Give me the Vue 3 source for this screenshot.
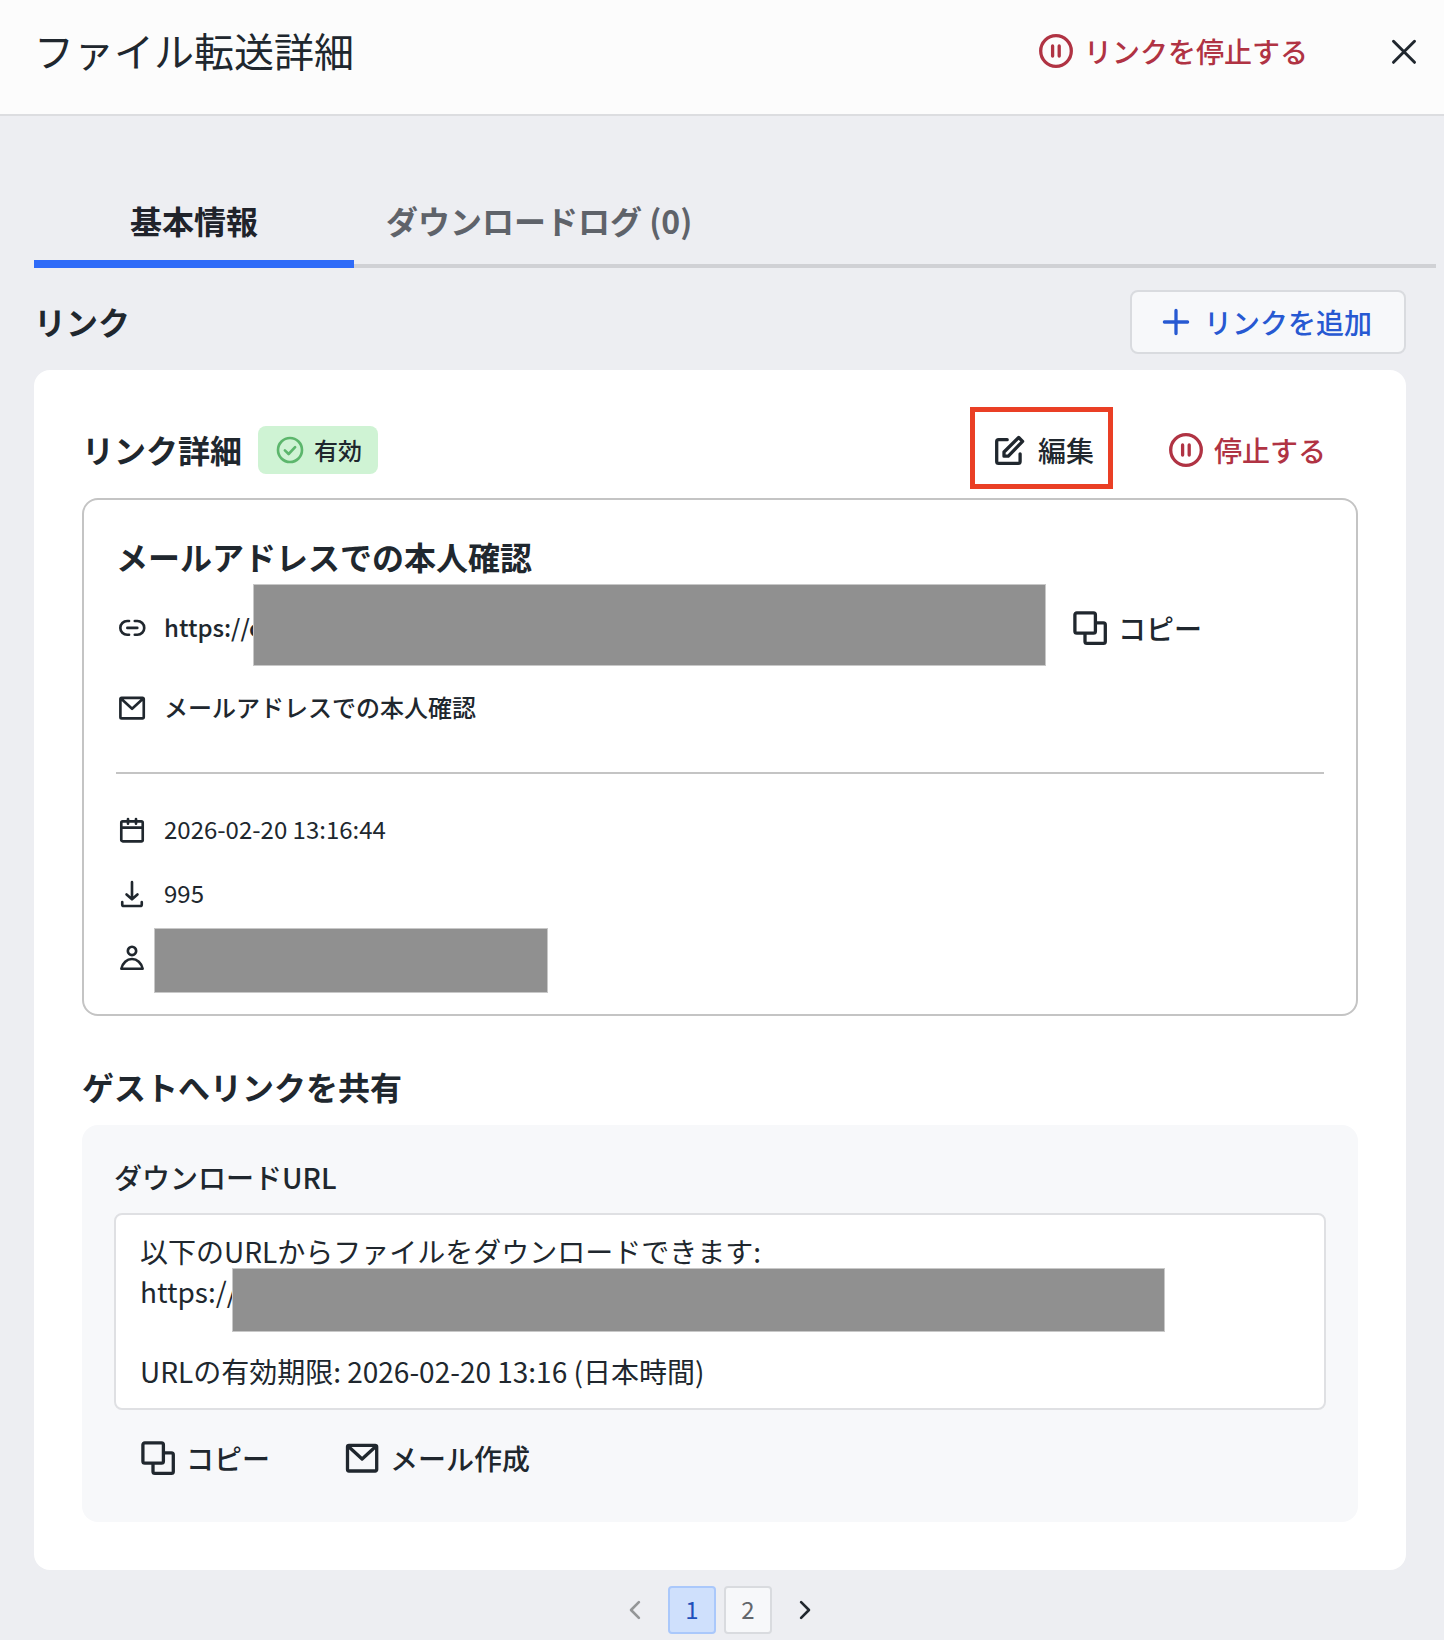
<template>
  <div class="transfer-detail">
    <header class="detail-header">
      <h1 class="detail-title">ファイル転送詳細</h1>
      <div class="header-actions">
        <button type="button" class="text-btn danger">
          <Icon name="pause" class="icon" />リンクを停止する
        </button>
        <button type="button" class="close-btn" aria-label="閉じる">
          <Icon name="close" class="icon" />
        </button>
      </div>
    </header>

    <main class="detail-body">
      <div class="tabs" role="tablist">
        <button
          v-for="tab in tabs"
          :key="tab.key"
          type="button"
          role="tab"
          class="tab"
          :class="{ active: tab.key === activeTab }"
          :aria-selected="tab.key === activeTab"
          @click="activeTab = tab.key"
        >
          {{ tab.label }}
        </button>
      </div>

      <div class="content">
        <div class="section-head">
          <h2 class="heading">リンク</h2>
          <button type="button" class="add-btn">
            <Icon name="plus" class="icon" />リンクを追加
          </button>
        </div>

        <section class="card">
          <div class="card-head">
            <h3 class="heading">リンク詳細</h3>
            <span class="badge"><Icon name="check" class="icon small" />有効</span>
            <div class="card-actions">
              <button type="button" class="text-btn highlighted">
                <Icon name="edit" class="icon" />編集
              </button>
              <button type="button" class="text-btn danger">
                <Icon name="pause" class="icon" />停止する
              </button>
            </div>
          </div>

          <div class="link-box">
            <h4 class="heading link-name">メールアドレスでの本人確認</h4>
            <div class="info-row tall medium">
              <Icon name="link" class="icon small" />
              <span class="info-text link-url">https://c</span>
              <span class="mask mask-url"></span>
              <button type="button" class="text-btn">
                <Icon name="copy" class="icon" />コピー
              </button>
            </div>
            <div class="info-row tall medium">
              <Icon name="mail" class="icon small" />
              <span class="info-text">メールアドレスでの本人確認</span>
            </div>
            <hr class="divider" />
            <div class="info-list">
              <div class="info-row">
                <Icon name="calendar" class="icon small" />
                <span class="info-text">2026-02-20 13:16:44</span>
              </div>
              <div class="info-row">
                <Icon name="download" class="icon small" />
                <span class="info-text">995</span>
              </div>
              <div class="info-row">
                <Icon name="user" class="icon small" />
                <span class="mask mask-user"></span>
              </div>
            </div>
          </div>

          <h3 class="heading share-title">ゲストへリンクを共有</h3>
          <div class="share-panel">
            <label for="share-text" class="share-label">ダウンロードURL</label>
            <div class="share-field">
              <textarea id="share-text" class="share-text" rows="4" readonly :value="shareText"></textarea>
              <span class="mask mask-share"></span>
            </div>
            <div class="share-actions">
              <button type="button" class="text-btn">
                <Icon name="copy" class="icon" />コピー
              </button>
              <button type="button" class="text-btn">
                <Icon name="mail" class="icon" />メール作成
              </button>
            </div>
          </div>
        </section>

        <nav class="pagination" aria-label="ページ">
          <button type="button" class="page-arrow" aria-label="前へ" :disabled="page === 1" @click="page--">
            <Icon name="prev" class="icon small" />
          </button>
          <button
            v-for="n in pageCount"
            :key="n"
            type="button"
            class="page-btn"
            :class="{ active: n === page }"
            @click="page = n"
          >
            {{ n }}
          </button>
          <button type="button" class="page-arrow" aria-label="次へ" :disabled="page === pageCount" @click="page++">
            <Icon name="next" class="icon small" />
          </button>
        </nav>
      </div>
    </main>
  </div>
</template>

<script setup>
import { h, ref } from 'vue'

// 40x40 の線アイコン
const icons = {
  pause: 'M20 4.7a15.3 15.3 0 1 1 0 30.6a15.3 15.3 0 1 1 0-30.6ZM16.6 15V25M23.2 15V25',
  close: 'M9.5 10.3L30.5 31.3M30.5 10.3L9.5 31.3',
  plus: 'M20 8.4V31.6M8.4 20H31.6',
  check: 'M20 5a15 15 0 1 1 0 30a15 15 0 1 1 0-30ZM13.6 20.4L18.3 25L26.4 16.4',
  edit: 'M17.2 9.7H8.6a1.9 1.9 0 0 0-1.9 1.9V31.5a1.9 1.9 0 0 0 1.9 1.9H28.2a1.9 1.9 0 0 0 1.9-1.9V23.8M14 22L28.7 7.5L32.6 11.4L18.3 26.2H14Z',
  copy: 'M6.8 4.8H23.5a1.9 1.9 0 0 1 1.9 1.9V23.2a1.9 1.9 0 0 1-1.9 1.9H6.8a1.9 1.9 0 0 1-1.9-1.9V6.7a1.9 1.9 0 0 1 1.9-1.9ZM26 14.8H33.4a1.9 1.9 0 0 1 1.9 1.9V33.4a1.9 1.9 0 0 1-1.9 1.9H16.9a1.9 1.9 0 0 1-1.9-1.9V26',
  mail: 'M7 7.3H33.2a1.5 1.5 0 0 1 1.5 1.5V31.5a1.5 1.5 0 0 1-1.5 1.5H7a1.5 1.5 0 0 1-1.5-1.5V8.8A1.5 1.5 0 0 1 7 7.3ZM6.2 8.2L20.1 21L34 8.2',
  link: 'M16.3 11.3H14a8.6 8.6 0 0 0 0 17.2H16.3M23.5 11.3H26.7a8.6 8.6 0 0 1 0 17.2H23.5M14.2 19.9H26.6',
  calendar: 'M8.4 9.2H31.6a1.8 1.8 0 0 1 1.8 1.8V32.4a1.8 1.8 0 0 1-1.8 1.8H8.4a1.8 1.8 0 0 1-1.8-1.8V11a1.8 1.8 0 0 1 1.8-1.8ZM6.6 17.1H33.4M15 6.2V12.2M25 6.2V12.2',
  download: 'M20 5.2V26.4M13.2 20.6L20 26.6L26.8 20.6M7.8 30.2V33a2 2 0 0 0 2 2H30.2a2 2 0 0 0 2-2V30.2',
  user: 'M20 6a5.2 5.2 0 1 1 0 10.4a5.2 5.2 0 1 1 0-10.4ZM6.7 33.4C8.2 26 13.6 21.3 20 21.3S31.8 26 33.3 33.4Z',
  prev: 'M23.6 10.2L13.8 20L23.6 29.8',
  next: 'M16.4 10.2L26.2 20L16.4 29.8'
}

const Icon = ({ name }) =>
  h('svg', { viewBox: '0 0 40 40', 'aria-hidden': 'true' }, [h('path', { d: icons[name] })])
Icon.props = ['name']

const tabs = [
  { key: 'basic', label: '基本情報' },
  { key: 'log', label: 'ダウンロードログ (0)' }
]
const activeTab = ref('basic')

const page = ref(1)
const pageCount = 2

const shareText = `以下のURLからファイルをダウンロードできます:
https://

URLの有効期限: 2026-02-20 13:16 (日本時間)`
</script>

<style>
body {
  margin: 0;
  background: #edeef2;
}
</style>

<style scoped>
.transfer-detail {
  min-height: 100vh;
  background: #edeef2;
  color: #20272e;
  font-family: "Noto Sans CJK JP", "Noto Sans", sans-serif;
  font-size: 24px;
}
.transfer-detail * {
  box-sizing: border-box;
}
button,
textarea {
  font: inherit;
  color: inherit;
}
button {
  display: flex;
  align-items: center;
  justify-content: center;
  margin: 0;
  padding: 0;
  border: 0;
  background: none;
  white-space: nowrap;
  cursor: pointer;
}
.icon {
  flex: none;
  width: 40px;
  height: 40px;
  fill: none;
  stroke: currentColor;
  stroke-width: 3.3;
  stroke-linecap: round;
  stroke-linejoin: round;
}
.icon.small {
  width: 32px;
  height: 32px;
}
.heading {
  margin: 0;
  font-size: 32px;
  font-weight: 700;
  line-height: 48px;
}
.section-head .heading,
.card-head .heading {
  padding-bottom: 2px;
}
.text-btn {
  position: relative;
  gap: 8px;
  height: 64px;
  padding: 0 32px;
  font-size: 28px;
  font-weight: 500;
}
.danger {
  color: #b03343;
}

/* ヘッダー */
.detail-header {
  display: flex;
  align-items: center;
  justify-content: space-between;
  padding: 19px 8px 31px 34px;
  border-bottom: 2px solid #dcdde0;
  background: #fcfcfc;
}
.detail-title {
  margin: 0;
  padding-bottom: 2px;
  font-size: 40px;
  font-weight: 400;
  line-height: 60px;
}
.header-actions {
  display: flex;
  gap: 32px;
}
.close-btn {
  width: 64px;
  height: 64px;
}
.close-btn .icon {
  stroke-width: 3;
}

/* タブ */
.detail-body {
  padding: 56px 8px 6px 34px;
}
.tabs {
  display: flex;
  box-shadow: inset 0 -4px #d0d1d5;
}
.tab {
  height: 96px;
  min-width: 320px;
  padding: 0 32px;
  color: #5f636a;
  font-size: 32px;
  font-weight: 700;
}
.tab.active {
  color: #20232b;
  box-shadow: inset 0 -8px #2f6bf8;
}
.content {
  padding: 22px 30px 0 0;
}
.section-head {
  display: flex;
  align-items: center;
  justify-content: space-between;
  margin-bottom: 16px;
}
.add-btn {
  gap: 8px;
  height: 64px;
  padding: 0 32px 0 24px;
  border: 2px solid #d9dbdf;
  border-radius: 8px;
  background: #f7f8fa;
  color: #2759d2;
  font-size: 28px;
  font-weight: 500;
}

/* リンク詳細 */
.card {
  padding: 48px;
  border-radius: 16px;
  background: #fff;
}
.card-head {
  display: flex;
  align-items: center;
  gap: 16px;
  margin-bottom: 16px;
}
.card-actions {
  display: flex;
  gap: 8px;
  margin-left: auto;
}
.badge {
  display: flex;
  align-items: center;
  gap: 8px;
  height: 48px;
  padding: 0 16px;
  border-radius: 8px;
  background: #cff3d4;
  font-weight: 500;
  line-height: 32px;
}
.badge .icon {
  color: #5cb66c;
}
.highlighted::after {
  content: "";
  position: absolute;
  inset: -11px 13px -7px 12px;
  border: 5px solid #ea3f25;
}
.link-box {
  padding: 32px;
  border: 2px solid #c4c4c4;
  border-radius: 16px;
}
.link-name {
  margin-bottom: 16px;
}
.info-row {
  position: relative;
  display: flex;
  align-items: center;
  gap: 16px;
  height: 48px;
}
.info-row.tall {
  height: 64px;
}
.info-row.tall + .info-row.tall {
  margin-top: 16px;
}
.info-row.medium {
  font-weight: 500;
}
.info-text {
  padding-bottom: 2px;
  line-height: 32px;
}
.link-url {
  flex: 0 1 858px;
}
.info-list {
  display: grid;
  gap: 16px;
}
.divider {
  height: 2px;
  margin: 32px 0;
  border: 0;
  background: #c4c4c4;
}

/* マスク */
.mask {
  position: absolute;
  border: 1px solid #c8c8c8;
  background: #909090;
}
.mask-url {
  top: -12px;
  left: 137px;
  width: 793px;
  height: 82px;
}
.mask-user {
  top: -6px;
  left: 38px;
  width: 394px;
  height: 65px;
}
.mask-share {
  top: 55px;
  left: 118px;
  width: 933px;
  height: 64px;
}

/* 共有 */
.share-title {
  margin: 46px 0 15px;
}
.share-panel {
  padding: 32px;
  border-radius: 16px;
  background: #f7f8fa;
}
.share-label {
  display: block;
  margin-bottom: 16px;
  font-size: 28px;
  font-weight: 500;
  line-height: 40px;
}
.share-field {
  position: relative;
}
.share-text {
  display: block;
  width: 100%;
  height: 197px;
  padding: 16px 24px;
  border: 2px solid #dfe0e3;
  border-radius: 8px;
  background: #fff;
  font-size: 28px;
  line-height: 40px;
  resize: none;
  overflow: hidden;
  outline: none;
}
.share-actions {
  display: flex;
  gap: 8px;
  margin: 16px -8px 0;
}

/* ページネーション */
.pagination {
  display: flex;
  justify-content: center;
  gap: 8px;
  margin-top: 16px;
}
.page-btn,
.page-arrow {
  width: 48px;
  height: 48px;
}
.page-arrow:disabled {
  color: #949698;
}
.page-btn {
  padding-bottom: 2px;
  border: 2px solid #d9dbdf;
  border-radius: 4px;
  background: #f7f8fa;
  color: #63676c;
  line-height: 32px;
}
.page-btn.active {
  border-color: #aac8fb;
  background: #cfe0fc;
  color: #1f50bb;
}
</style>
